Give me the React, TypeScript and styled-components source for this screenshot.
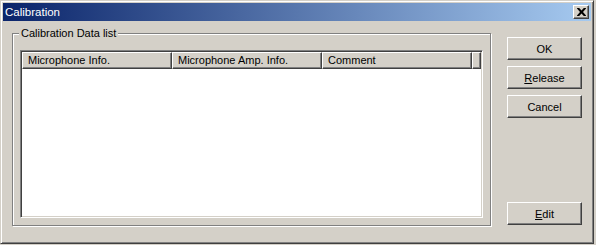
import styled, { createGlobalStyle } from 'styled-components';

const face = '#d4d0c8';

const GlobalStyle = createGlobalStyle`
  html, body {
    margin: 0;
    padding: 0;
    background: ${face};
  }
  body {
    font-family: 'Liberation Sans', Arial, sans-serif;
    font-size: 11px;
    color: #000;
  }
`;

const Window = styled.div`
  box-sizing: border-box;
  width: 594px;
  height: 244px;
  background: ${face};
  border-top: 1px solid ${face};
  border-left: 1px solid ${face};
  border-right: 1px solid #404040;
  border-bottom: 1px solid #404040;
  box-shadow: inset 1px 1px 0 #fff, inset -1px -1px 0 #808080;
  padding: 2px;
  display: flex;
  flex-direction: column;
`;

const TitleBar = styled.div`
  height: 18px;
  display: flex;
  align-items: center;
  padding: 0 2px 0 2px;
  background: linear-gradient(to right, #0a246a, #a6caf0);
  color: #fff;
`;

const TitleText = styled.span`
  flex: 1;
  font-size: 11.5px;
  line-height: 18px;
`;

const CloseButton = styled.div`
  box-sizing: border-box;
  width: 16px;
  height: 14px;
  background: ${face};
  border-top: 1px solid #fff;
  border-left: 1px solid #fff;
  border-right: 1px solid #404040;
  border-bottom: 1px solid #404040;
  box-shadow: inset -1px -1px 0 #808080;
  display: flex;
  align-items: center;
  justify-content: center;
`;

const Body = styled.div`
  flex: 1;
  display: flex;
  padding: 12px 0 0 9px;
`;

const GroupBox = styled.div`
  position: relative;
  box-sizing: border-box;
  width: 479px;
  height: 193px;
  border: 1px solid #808080;
  box-shadow: 1px 1px 0 #fff, inset 1px 1px 0 #fff;
  padding: 16px 7px 7px 7px;
  display: flex;
`;

const Legend = styled.span`
  position: absolute;
  top: -7px;
  left: 6px;
  padding: 0 2px;
  background: ${face};
  line-height: 13px;
`;

const ListView = styled.div`
  flex: 1;
  background: #fff;
  border-top: 1px solid #808080;
  border-left: 1px solid #808080;
  border-right: 1px solid #fff;
  border-bottom: 1px solid #fff;
  box-shadow: inset 1px 1px 0 #404040, inset -1px -1px 0 ${face};
  padding: 1px;
  display: flex;
  flex-direction: column;
`;

const HeaderRow = styled.div`
  display: flex;
  height: 17px;
`;

const HeaderCell = styled.div<{ $w: number }>`
  box-sizing: border-box;
  width: ${(p) => p.$w}px;
  flex: none;
  height: 17px;
  background: ${face};
  border-top: 1px solid #fff;
  border-left: 1px solid #fff;
  border-right: 1px solid #404040;
  border-bottom: 1px solid #404040;
  box-shadow: inset -1px -1px 0 #808080;
  padding-left: 5px;
  line-height: 14px;
  white-space: nowrap;
  overflow: hidden;
`;

const HeaderFill = styled(HeaderCell)`
  flex: 1;
  padding: 0;
`;

const Buttons = styled.div`
  display: flex;
  flex-direction: column;
  gap: 6px;
  margin-left: 16px;
  padding: 4px 0 16px 0;
`;

const Button = styled.div<{ $bottom?: boolean }>`
  box-sizing: border-box;
  width: 75px;
  height: 23px;
  background: ${face};
  border-top: 1px solid #fff;
  border-left: 1px solid #fff;
  border-right: 1px solid #404040;
  border-bottom: 1px solid #404040;
  box-shadow: inset -1px -1px 0 #808080;
  display: flex;
  align-items: center;
  justify-content: center;
  margin-top: ${(p) => (p.$bottom ? 'auto' : '0')};
  u {
    text-decoration: underline;
    text-underline-offset: 1px;
  }
`;

const columns = [
  { title: 'Microphone Info.', width: 150 },
  { title: 'Microphone Amp. Info.', width: 150 },
  { title: 'Comment', width: 150 },
];

export default function App() {
  return (
    <>
      <GlobalStyle />
      <Window>
        <TitleBar>
          <TitleText>Calibration</TitleText>
          <CloseButton>
            <svg width="9" height="8" viewBox="0 0 9 8">
              <path d="M0 0h2.2l2.3 2.6L6.8 0H9v.6L6 4l3 3.4V8H6.8L4.5 5.4 2.2 8H0v-.6L3 4 0 .6z" fill="#000" />
            </svg>
          </CloseButton>
        </TitleBar>
        <Body>
          <GroupBox>
            <Legend>Calibration Data list</Legend>
            <ListView>
              <HeaderRow>
                {columns.map((c) => (
                  <HeaderCell key={c.title} $w={c.width}>
                    {c.title}
                  </HeaderCell>
                ))}
                <HeaderFill $w={0} />
              </HeaderRow>
            </ListView>
          </GroupBox>
          <Buttons>
            <Button>OK</Button>
            <Button>
              <span>
                <u>R</u>elease
              </span>
            </Button>
            <Button>Cancel</Button>
            <Button $bottom>
              <span>
                <u>E</u>dit
              </span>
            </Button>
          </Buttons>
        </Body>
      </Window>
    </>
  );
}
